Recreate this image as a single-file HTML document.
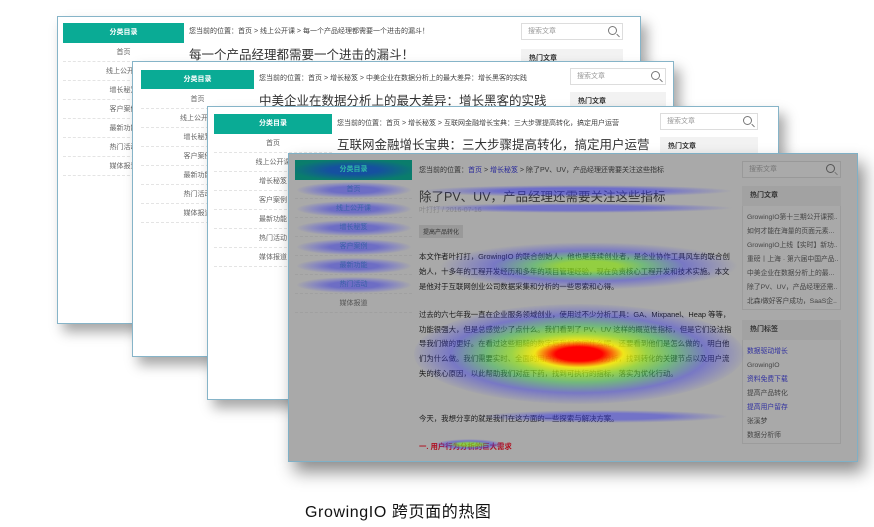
<!DOCTYPE html>
<html><head><meta charset="utf-8"><style>
*{margin:0;padding:0;box-sizing:border-box}
body{width:874px;height:527px;background:#fff;position:relative;overflow:hidden;font-family:"Liberation Sans","Noto Sans CJK SC",sans-serif;color:#555}
.card{position:absolute;background:#fff;border:1.5px solid #86b4c8;box-shadow:6px 8px 12px rgba(0,0,0,.35);overflow:hidden}
.a{position:absolute;white-space:nowrap}
.teal{position:absolute;background:#0aab95;color:#fff;font-size:7px;font-weight:bold;text-align:center;line-height:20px}
.menu{position:absolute;font-size:7px;color:#666;text-align:center}
.menu div{height:19px;line-height:19px;border-bottom:1px dashed #e4e4e4}
.bc{font-size:7px;color:#444}
.tt{font-size:12.5px;color:#333}
.srch{position:absolute;border:1px solid #ddd;font-size:7px;color:#999;line-height:16px;padding-left:6px;background:#fff}
.srch span{position:absolute;right:5px;top:2px;width:9px;height:9px;border:1.3px solid #777;border-radius:50%}
.srch span:after{content:"";position:absolute;width:4px;height:1.3px;background:#777;right:-4px;bottom:-2px;transform:rotate(45deg)}
.hot{position:absolute;background:#f2f2f2;font-size:7px;color:#333;font-weight:bold;line-height:20px;padding-left:8px}
.blob{position:absolute;border-radius:50%}
.g{position:absolute;font-size:7px;color:#333;white-space:nowrap}
.mb{position:absolute;left:8px;width:114px;height:16px;border-radius:50%;background:radial-gradient(ellipse,rgba(60,60,220,.55) 0 30%,rgba(80,80,230,.35) 50%,rgba(90,90,230,0) 72%)}
</style></head><body>

<div class="card" style="left:57px;top:16px;width:584px;height:308px">
 <div class="teal" style="left:5px;top:6px;width:121px">分类目录</div>
 <div class="menu" style="left:5px;top:26px;width:121px"><div>首页</div><div>线上公开课</div><div>增长秘笈</div><div>客户案例</div><div>最新功能</div><div>热门活动</div><div>媒体报道</div></div>
 <div class="a bc" style="left:131px;top:9px">您当前的位置：首页 &gt; 线上公开课 &gt; 每一个产品经理都需要一个进击的漏斗！</div>
 <div class="a tt" style="left:131px;top:27px">每一个产品经理都需要一个进击的漏斗！</div>
 <div class="srch" style="left:463px;top:6px;width:102px;height:17px">搜索文章<span></span></div>
 <div class="hot" style="left:463px;top:32px;width:102px">热门文章</div>
</div>

<div class="card" style="left:132px;top:61px;width:542px;height:296px">
 <div class="teal" style="left:8px;top:8px;width:113px;height:19px;line-height:19px">分类目录</div>
 <div class="menu" style="left:8px;top:28px;width:113px"><div>首页</div><div>线上公开课</div><div>增长秘笈</div><div>客户案例</div><div>最新功能</div><div>热门活动</div><div>媒体报道</div></div>
 <div class="a bc" style="left:126px;top:11px">您当前的位置：首页 &gt; 增长秘笈 &gt; 中美企业在数据分析上的最大差异：增长黑客的实践</div>
 <div class="a tt" style="left:126px;top:28px">中美企业在数据分析上的最大差异：增长黑客的实践</div>
 <div class="srch" style="left:437px;top:6px;width:96px;height:17px">搜索文章<span></span></div>
 <div class="hot" style="left:437px;top:30px;width:96px">热门文章</div>
</div>

<div class="card" style="left:207px;top:106px;width:572px;height:294px">
 <div class="teal" style="left:6px;top:7px;width:118px">分类目录</div>
 <div class="menu" style="left:6px;top:27px;width:118px"><div>首页</div><div>线上公开课</div><div>增长秘笈</div><div>客户案例</div><div>最新功能</div><div>热门活动</div><div>媒体报道</div></div>
 <div class="a bc" style="left:129px;top:11px">您当前的位置：首页 &gt; 增长秘笈 &gt; 互联网金融增长宝典：三大步骤提高转化，搞定用户运营</div>
 <div class="a tt" style="left:129px;top:27px">互联网金融增长宝典：三大步骤提高转化，搞定用户运营</div>
 <div class="srch" style="left:452px;top:6px;width:98px;height:17px">搜索文章<span></span></div>
 <div class="hot" style="left:452px;top:30px;width:98px">热门文章</div>
</div>

<div class="card" style="left:288px;top:153px;width:570px;height:309px;background:#a9a9a9;border-color:#7fb0c6;box-shadow:6px 10px 16px rgba(0,0,0,.45)">
 <div class="teal" style="left:6px;top:6px;width:117px;background:radial-gradient(ellipse,#1550a0 0 30%,#0a7d6c 75%);color:#2fb8a6">分类目录</div>
 <div class="menu" style="left:6px;top:26px;width:117px;color:#3a8a6a"><div style="border-color:#a0a0a0">首页</div><div style="border-color:#a0a0a0">线上公开课</div><div style="border-color:#a0a0a0">增长秘笈</div><div style="border-color:#a0a0a0">客户案例</div><div style="border-color:#a0a0a0">最新功能</div><div style="border-color:#a0a0a0">热门活动</div><div style="border-color:#a0a0a0;color:#555">媒体报道</div></div>
 <div class="a bc" style="left:130px;top:11px;color:#333">您当前的位置：<span style="color:#2a2a9a">首页</span> &gt; <span style="color:#2a2a9a">增长秘笈</span> &gt; 除了PV、UV，产品经理还需要关注这些指标</div>
 <div class="a tt" style="left:130px;top:32px;color:#333">除了PV、UV，产品经理还需要关注这些指标</div>
 <div class="a" style="left:130px;top:51px;font-size:7px;color:#888">叶打打 / 2016-07-16</div>
 <div class="a" style="left:130px;top:71px;font-size:6px;background:#999;color:#333;padding:2px 4px">提高产品转化</div>
 <div class="a" style="left:130px;top:95px;font-size:7.4px;color:#1a1a1a;line-height:15px;width:314px;white-space:normal">本文作者叶打打，GrowingIO 的联合创始人，他也是连续创业者，是企业协作工具风车的联合创始人，十多年的工程开发经历和多年的项目管理经验，现在负责核心工程开发和技术实施。本文是他对于互联网创业公司数据采集和分析的一些思索和心得。</div>
 <div class="a" style="left:130px;top:154px;font-size:7.4px;color:#1a1a1a;line-height:14.7px;width:314px;white-space:normal">过去的六七年我一直在企业服务领域创业，使用过不少分析工具：GA、Mixpanel、Heap 等等，功能很强大，但是总感觉少了点什么。我们看到了 PV、UV 这样的概览性指标，但是它们没法指导我们做的更好。在看过这些粗糙的数字后我们会问什么呢，还要看到他们是怎么做的，明白他们为什么做。我们需要实时、全面的用户行为整体流程的分析，找到转化的关键节点以及用户流失的核心原因，以此帮助我们对症下药，找到可执行的指标，落实为优化行动。</div>
 <div class="a" style="left:130px;top:259px;font-size:7.4px;color:#1a1a1a">今天，我想分享的就是我们在这方面的一些探索与解决方案。</div>
 <div class="a" style="left:130px;top:287px;font-size:7.4px;color:#b01020;font-weight:bold">一. 用户行为分析的巨大需求</div>

 <div class="srch" style="left:453px;top:7px;width:99px;height:17px;background:#aaa;border-color:#999;color:#777">搜索文章<span style="border-color:#555"></span></div>
 <div class="hot" style="left:453px;top:32px;width:99px;background:#a2a2a2;color:#333">热门文章</div>
 <div class="a" style="left:453px;top:52px;width:99px;height:104px;border:1px solid #9c9c9c;border-top:none"></div>
 <div class="g" style="left:458px;top:57px;line-height:14px;font-size:6.8px;color:#444">GrowingIO第十三期公开课预..<br>如何才能在海量的页面元素...<br>GrowingIO上线【实时】新功..<br>重磅丨上海 · 第六届中国产品..<br>中美企业在数据分析上的最...<br>除了PV、UV，产品经理还需..<br>北森l做好客户成功，SaaS企..</div>
 <div class="hot" style="left:453px;top:166px;width:99px;background:#a2a2a2;color:#333">热门标签</div>
 <div class="a" style="left:453px;top:186px;width:99px;height:104px;border:1px solid #9c9c9c;border-top:none"></div>
 <div class="g" style="left:458px;top:191px;line-height:14px;font-size:6.8px;color:#444"><span style="color:#3030a0">数据驱动增长</span><br>GrowingIO<br><span style="color:#3030a0">资料免费下载</span><br>提高产品转化<br><span style="color:#3030a0">提高用户留存</span><br>张溪梦<br>数据分析师</div>

 <div class="mb" style="top:28px"></div>
 <div class="mb" style="top:47px"></div>
 <div class="mb" style="top:66px"></div>
 <div class="mb" style="top:85px"></div>
 <div class="mb" style="top:104px"></div>
 <div class="mb" style="top:123px"></div>
 <div class="blob" style="left:130px;top:31px;width:315px;height:12px;background:radial-gradient(ellipse,rgba(60,60,230,.55) 0 35%,rgba(90,90,230,0) 70%)"></div>
 <div class="blob" style="left:130px;top:49px;width:315px;height:10px;background:radial-gradient(ellipse,rgba(60,60,230,.5) 0 35%,rgba(90,90,230,0) 70%)"></div>
 <div class="blob" style="left:150px;top:88px;width:300px;height:48px;background:radial-gradient(ellipse,rgba(140,220,30,.75) 0 14%,rgba(60,200,80,.5) 26%,rgba(60,60,230,.45) 45%,rgba(90,90,230,0) 70%)"></div>
 <div class="blob" style="left:125px;top:150px;width:330px;height:100px;background:radial-gradient(ellipse,rgba(255,0,0,1) 0 10%,rgba(255,240,0,.85) 19%,rgba(150,230,30,.7) 29%,rgba(60,200,80,.5) 40%,rgba(60,60,230,.45) 55%,rgba(90,90,230,0) 72%)"></div>
 <div class="blob" style="left:190px;top:256px;width:250px;height:13px;background:radial-gradient(ellipse,rgba(60,60,230,.5) 0 35%,rgba(90,90,230,0) 70%)"></div>
 <div class="blob" style="left:145px;top:285px;width:70px;height:11px;background:radial-gradient(ellipse,rgba(120,220,40,.7) 0 20%,rgba(60,60,230,.5) 45%,rgba(90,90,230,0) 70%)"></div>
</div>

<div class="a" style="left:305px;top:498px;font-size:16px;color:#111;letter-spacing:0.6px">GrowingIO 跨页面的热图</div>
</body></html>
